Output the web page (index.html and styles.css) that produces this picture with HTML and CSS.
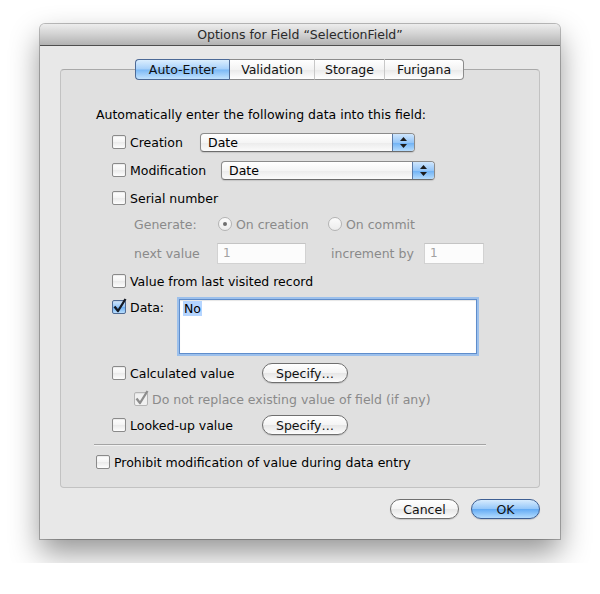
FILE: index.html
```html
<!DOCTYPE html>
<html lang="en">
<head>
    <meta charset="UTF-8">
    <title>Options for Field</title>
    <link rel="stylesheet" href="styles.css">
</head>
<body>
    <div class="window">
        <div class="titlebar">Options for Field “SelectionField”</div>
        <div class="win-body">
            <div class="group">
                <div class="tabs">
                    <span class="tab active t94">Auto-Enter</span>
                    <span class="tab t85">Validation</span>
                    <span class="tab t70">Storage</span>
                    <span class="tab t80">Furigana</span>
                </div>

                <div class="row heading">Automatically enter the following data into this field:</div>

                <div class="row opt">
                    <label class="check w-creation"><span class="cb"></span>Creation</label>
                    <div class="popup w215"><span class="popup-text">Date</span><span class="popup-arrows"><svg width="7" height="11" viewBox="0 0 7 11"><path d="M3.5 0 L7 4 L0 4 Z M0 7 L7 7 L3.5 11 Z" fill="#1c1c1c"/></svg></span></div>
                </div>

                <div class="row opt">
                    <label class="check w-modif"><span class="cb"></span>Modification</label>
                    <div class="popup w214"><span class="popup-text">Date</span><span class="popup-arrows"><svg width="7" height="11" viewBox="0 0 7 11"><path d="M3.5 0 L7 4 L0 4 Z M0 7 L7 7 L3.5 11 Z" fill="#1c1c1c"/></svg></span></div>
                </div>

                <div class="row opt">
                    <label class="check"><span class="cb"></span>Serial number</label>
                </div>

                <div class="row sub gen">
                    <span class="dim w-generate">Generate:</span>
                    <span class="radio-opt w-oncreate"><span class="radio sel"></span>On creation</span>
                    <span class="radio-opt"><span class="radio"></span>On commit</span>
                </div>

                <div class="row sub next">
                    <span class="dim w-next">next value</span>
                    <span class="field w89">1</span>
                    <span class="dim w-incr">increment by</span>
                    <span class="field w60">1</span>
                </div>

                <div class="row opt last">
                    <label class="check"><span class="cb"></span>Value from last visited record</label>
                </div>

                <div class="row opt data">
                    <label class="check w-data"><span class="cb on"><svg width="14" height="14" viewBox="0 0 14 14"><path d="M2.5 6.5 L6 11 L13.5 -1" fill="none" stroke="#151a24" stroke-width="2.3" stroke-linejoin="round"/></svg></span>Data:</label>
                    <div class="textbox"><span class="sel-text">No</span></div>
                </div>

                <div class="row opt short">
                    <label class="check w-calc"><span class="cb"></span>Calculated value</label>
                    <span class="btn w86">Specify…</span>
                </div>

                <div class="row sub short">
                    <label class="check dim"><span class="cb dis"><svg width="14" height="14" viewBox="0 0 14 14"><path d="M2.5 6.5 L6 11 L13.5 -1" fill="none" stroke="#8d8d8d" stroke-width="2.3" stroke-linejoin="round"/></svg></span>Do not replace existing value of field (if any)</label>
                </div>

                <div class="row opt short">
                    <label class="check w-calc"><span class="cb"></span>Looked-up value</label>
                    <span class="btn w86">Specify…</span>
                </div>

                <div class="separator"></div>

                <div class="row prohibit">
                    <label class="check"><span class="cb"></span>Prohibit modification of value during data entry</label>
                </div>
            </div>

            <div class="buttons">
                <span class="btn w69">Cancel</span>
                <span class="btn default w69">OK</span>
            </div>
        </div>
    </div>
</body>
</html>
```

FILE: styles.css
```css
body {
    margin: 0;
    padding: 24px 40px;
    background: #ffffff;
    font-family: "DejaVu Sans", Verdana, sans-serif;
    font-size: 12.5px;
    color: #000;
}

.window {
    width: 520px;
    height: 515px;
    box-sizing: border-box;
    background: #e8e8e8;
    border-radius: 5px 5px 0 0;
    box-shadow: 0 0 0 1px rgba(0,0,0,0.25), 0 14px 30px rgba(0,0,0,0.42);
    overflow: hidden;
}

.titlebar {
    height: 21px;
    line-height: 21px;
    text-align: center;
    color: #2a2a2a;
    background: linear-gradient(to bottom, #ededed, #d4d4d4 45%, #b2b2b2);
    border-bottom: 1px solid #4e4e4e;
}

.win-body {
    padding: 23px 20px 0 20px;
}

.group {
    width: 480px;
    height: 419px;
    box-sizing: border-box;
    border: 1px solid #c2c2c2;
    border-top-color: #a9a9a9;
    border-radius: 4px;
    background: #e0e0e0;
}

/* tabs sit across the group border */
.tabs {
    display: flex;
    justify-content: center;
    margin-top: -11px;
    margin-left: -1px;
    margin-bottom: 20px;
}

.tab {
    height: 19px;
    line-height: 19px;
    box-sizing: content-box;
    text-align: center;
    border: 1px solid #8c8c8c;
    border-left: 1px solid #c8c8c8;
    border-right: none;
    background: linear-gradient(to bottom, #ffffff, #f3f3f3 50%, #e9e9e9 51%, #ffffff);
    color: #111;
}

.t94 { width: 93px; }
.t85 { width: 84px; }
.t70 { width: 69px; }
.t80 { width: 78px; }

.tab:first-child {
    border-left-color: #4d6a96;
    border-radius: 4px 0 0 4px;
}

.tab:last-child {
    border-right: 1px solid #8c8c8c;
    border-radius: 0 4px 4px 0;
}

.tab.active {
    border-color: #4d6a96;
    background: linear-gradient(to bottom, #dbeefe, #a6d0fa 48%, #7bb8f5 52%, #c3e3fe);
}

.tab.active + .tab {
    border-left-color: #4d6a96;
}

.row {
    display: flex;
    align-items: center;
    height: 28px;
}

.heading {
    margin-left: 35px;
}

.opt {
    margin-left: 51px;
}

.sub {
    margin-left: 73px;
}

.gen { height: 24px; }
.next { height: 34px; }
.last { height: 22px; }
.short { height: 26px; }
.prohibit { height: 22px; margin-left: 35px; }

.data {
    height: 68px;
    align-items: flex-start;
    padding-top: 5px;
    box-sizing: border-box;
}

.data .check {
    height: 20px;
}

.check {
    display: flex;
    align-items: center;
    gap: 4px;
    white-space: nowrap;
}

.cb {
    width: 12px;
    height: 12px;
    flex: none;
    border: 1px solid #8a8a8a;
    border-radius: 2px;
    background: linear-gradient(to bottom, #ffffff, #f4f4f4 50%, #eaeaea 51%, #fdfdfd);
    box-shadow: inset 0 1px 1px rgba(0,0,0,0.08);
    position: relative;
}

.cb svg {
    position: absolute;
    left: -1px;
    top: -1px;
    overflow: visible;
}

.cb.on {
    border-color: #4f6a93;
    background: linear-gradient(to bottom, #d3e8fd, #92c4f8 50%, #6aaef3 51%, #b9defd);
}

.cb.dis {
    border-color: #b5b5b5;
    background: #f1f1f1;
}

.dim {
    color: #8a8a8a;
}

.w-creation { width: 88px; }
.w-modif { width: 109px; }
.w-data { width: 65px; }
.w-calc { width: 150px; }
.w-generate { width: 84px; }
.w-oncreate { width: 110px; }
.w-next { width: 83px; }
.w-incr { width: 93px; margin-left: 25px; }

.popup {
    display: flex;
    height: 17px;
    border: 1px solid #8b8b8b;
    border-bottom-color: #6c6c6c;
    border-radius: 4px;
    background: linear-gradient(to bottom, #ffffff, #f5f5f5 50%, #ebebeb 51%, #fbfbfb);
    box-shadow: 0 1px 1px rgba(0,0,0,0.12);
    overflow: hidden;
}

.w215 { width: 213px; }
.w214 { width: 212px; }

.popup-text {
    flex: 1;
    line-height: 17px;
    padding-left: 7px;
}

.popup-arrows {
    width: 21px;
    display: flex;
    align-items: center;
    justify-content: center;
    border-left: 1px solid #5b7aa6;
    background: linear-gradient(to bottom, #cfe6fd, #95c6f8 50%, #6cb0f4 51%, #b6dcfd);
}

.radio-opt {
    display: flex;
    align-items: center;
    gap: 4px;
    color: #8a8a8a;
}

.radio {
    width: 12px;
    height: 12px;
    border: 1px solid #b3b3b3;
    border-radius: 50%;
    background: linear-gradient(to bottom, #fbfbfb, #ececec);
    position: relative;
}

.radio.sel::after {
    content: "";
    position: absolute;
    left: 4px;
    top: 4px;
    width: 4px;
    height: 4px;
    border-radius: 50%;
    background: #6e6e6e;
}

.field {
    height: 21px;
    line-height: 19px;
    box-sizing: border-box;
    padding-left: 5px;
    border: 1px solid #d2d2d2;
    border-top-color: #c4c4c4;
    background: #fcfcfc;
    color: #a2a2a2;
    font-size: 12px;
}

.w89 { width: 89px; }
.w60 { width: 60px; }

.textbox {
    margin: 2px 0 0 2px;
    padding: 1px 3px;
    width: 290px;
    height: 51px;
    border: 1px solid #5f8dcb;
    background: #ffffff;
    box-shadow: 0 0 0 2px #9cc0ec, inset 0 1px 1px rgba(0,0,0,0.1);
}

.sel-text {
    background: #b5d5ff;
    padding: 0 1px;
}

.btn {
    display: inline-flex;
    align-items: center;
    justify-content: center;
    height: 18px;
    box-sizing: content-box;
    border: 1px solid #6f6f6f;
    border-radius: 10px;
    background: linear-gradient(to bottom, #ffffff, #f4f4f4 50%, #e6e6e6 51%, #fdfdfd);
    box-shadow: 0 1px 1px rgba(0,0,0,0.15);
    color: #111;
}

.btn.w86 { width: 84px; }
.btn.w69 { width: 67px; }

.btn.default {
    border-color: #3e5f93;
    background: linear-gradient(to bottom, #d6ebfe, #93c6f9 50%, #62aaf4 51%, #b4dcfe);
}

.separator {
    height: 1px;
    width: 392px;
    margin: 6px 0 5px 33px;
    background: #a4a4a4;
    border-bottom: 1px solid #f2f2f2;
}

.buttons {
    display: flex;
    justify-content: flex-end;
    gap: 12px;
    margin-top: 11px;
}
```
